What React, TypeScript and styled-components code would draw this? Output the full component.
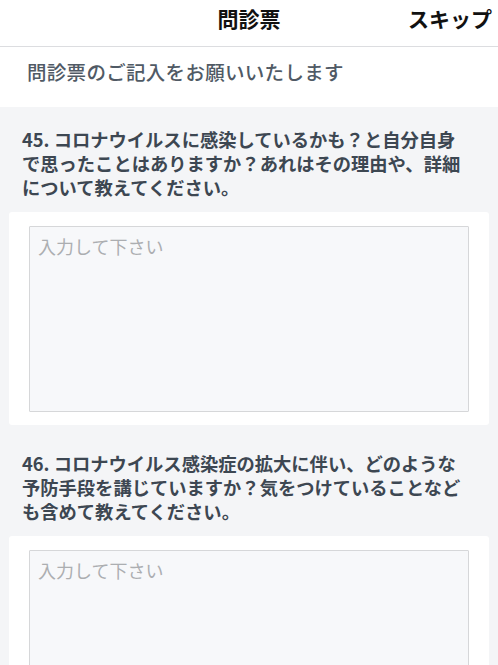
import styled, { createGlobalStyle } from "styled-components";

const GlobalStyle = createGlobalStyle`
    html, body {
        margin: 0;
        padding: 0;
        background: #f4f5f7;
    }
    body {
        font-family: "Noto Sans CJK JP", "Noto Sans", sans-serif;
    }
`

const questions = [
    {
        no: 45,
        text: "コロナウイルスに感染しているかも？と自分自身で思ったことはありますか？あれはその理由や、詳細について教えてください。",
    },
    {
        no: 46,
        text: "コロナウイルス感染症の拡大に伴い、どのような予防手段を講じていますか？気をつけていることなども含めて教えてください。",
    },
]

export default function App() {
    return (
        <>
            <GlobalStyle />
            <Page>
                <Header>
                    <span />
                    <Title>問診票</Title>
                    <SkipButton>スキップ</SkipButton>
                </Header>
                <Intro>問診票のご記入をお願いいたします</Intro>
                <QuestionList>
                    {questions.map((q) => (
                        <QuestionBlock key={q.no}>
                            <QuestionText>{`${q.no}. ${q.text}`}</QuestionText>
                            <AnswerCard>
                                <AnswerField placeholder="入力して下さい" />
                            </AnswerCard>
                        </QuestionBlock>
                    ))}
                </QuestionList>
            </Page>
        </>
    )
}

const Page = styled.div`
    width: 498px;
    height: 665px;
    background: #f4f5f7;
    overflow: hidden;
`

const Header = styled.header`
    display: grid;
    grid-template-columns: 1fr auto 1fr;
    align-items: start;
    height: 47px;
    padding: 6px 6px 0;
    box-sizing: border-box;
    background: #ffffff;
    border-bottom: 1px solid #dcdde0;
`

const Title = styled.h1`
    margin: 0;
    font-size: 21px;
    line-height: 24px;
    font-weight: 700;
    color: #111111;
`

const SkipButton = styled.button`
    justify-self: end;
    border: none;
    background: none;
    padding: 0;
    font-family: inherit;
    font-size: 21px;
    line-height: 24px;
    font-weight: 700;
    color: #111111;
`

const Intro = styled.p`
    margin: 0;
    height: 60px;
    padding: 13px 0 0 27px;
    box-sizing: border-box;
    background: #ffffff;
    font-size: 19.5px;
    letter-spacing: 0.3px;
    line-height: 24px;
    font-weight: 500;
    color: #505a65;
`

const QuestionList = styled.section`
    display: flex;
    flex-direction: column;
    gap: 26px;
    padding-top: 20px;
`

const QuestionBlock = styled.div`
    display: flex;
    flex-direction: column;
    gap: 13px;
`

const QuestionText = styled.h2`
    margin: 0;
    padding: 0 28px 0 22px;
    font-size: 18.3px;
    line-height: 24px;
    font-weight: 700;
    color: #3d4752;
`

const AnswerCard = styled.div`
    margin: 0 9px;
    padding: 14px 20px 13px;
    background: #ffffff;
    border-radius: 3px;
`

const AnswerField = styled.textarea`
    display: block;
    width: 100%;
    height: 186px;
    box-sizing: border-box;
    padding: 8px 8px;
    border: 1px solid #d6d7d9;
    border-radius: 1px;
    background: #f7f8fa;
    resize: none;
    font-family: inherit;
    font-size: 18px;
    line-height: 22px;
    color: #333333;

    &::placeholder {
        color: #acaeb1;
    }
`
